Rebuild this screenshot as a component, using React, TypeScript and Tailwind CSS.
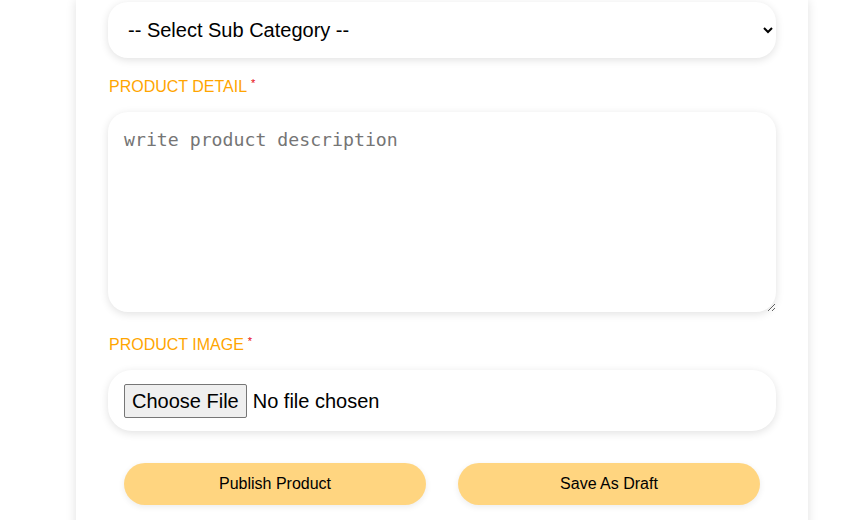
export default function App() {
  return (
    <div className="min-h-[520px] bg-white font-['Liberation_Sans',Arial,sans-serif] text-black">
      <div className="ml-[76px] w-[732px] bg-white px-8 pt-[2px] pb-10 shadow-[0_0_10px_rgba(0,0,0,0.12)]">
        <select className="block h-[56px] w-full rounded-[20px] bg-white pl-4 pr-1 text-[20px] shadow-[0_2px_8px_rgba(0,0,0,0.12)] outline-none">
          <option>-- Select Sub Category --</option>
        </select>

        <label className="mt-[20px] block h-[18px] pl-px text-[16px] leading-[18px] text-[#ffa500]">
          PRODUCT DETAIL
          <sup className="ml-[4px] text-[11px] text-red-600">*</sup>
        </label>

        <textarea
          placeholder="write product description"
          className="mt-[16px] block h-[200px] w-full rounded-[20px] bg-white px-4 pt-[14px] pb-4 font-['DejaVu_Sans_Mono',monospace] text-[18.2px] shadow-[0_2px_8px_rgba(0,0,0,0.12)] outline-none placeholder:text-[#757575]"
        />

        <label className="mt-[24px] block h-[18px] pl-px text-[16px] leading-[18px] text-[#ffa500]">
          PRODUCT IMAGE
          <sup className="ml-[4px] text-[11px] text-red-600">*</sup>
        </label>

        <div className="mt-[16px] flex h-[61px] items-center rounded-[24px] bg-white px-4 shadow-[0_2px_8px_rgba(0,0,0,0.12)]">
          <input
            type="file"
            className="text-[20px] file:mr-[6px] file:rounded-[2px] file:border file:border-[#767676] file:bg-[#efefef] file:px-[7px] file:py-[1px] file:text-black"
          />
        </div>

        <div className="mt-8 grid grid-cols-2 gap-8 px-4">
          <button className="h-[42px] rounded-full bg-[#ffd580] text-[16px] shadow-[0_2px_6px_rgba(0,0,0,0.08)]">
            Publish Product
          </button>
          <button className="h-[42px] rounded-full bg-[#ffd580] text-[16px] shadow-[0_2px_6px_rgba(0,0,0,0.08)]">
            Save As Draft
          </button>
        </div>
      </div>
    </div>
  );
}
